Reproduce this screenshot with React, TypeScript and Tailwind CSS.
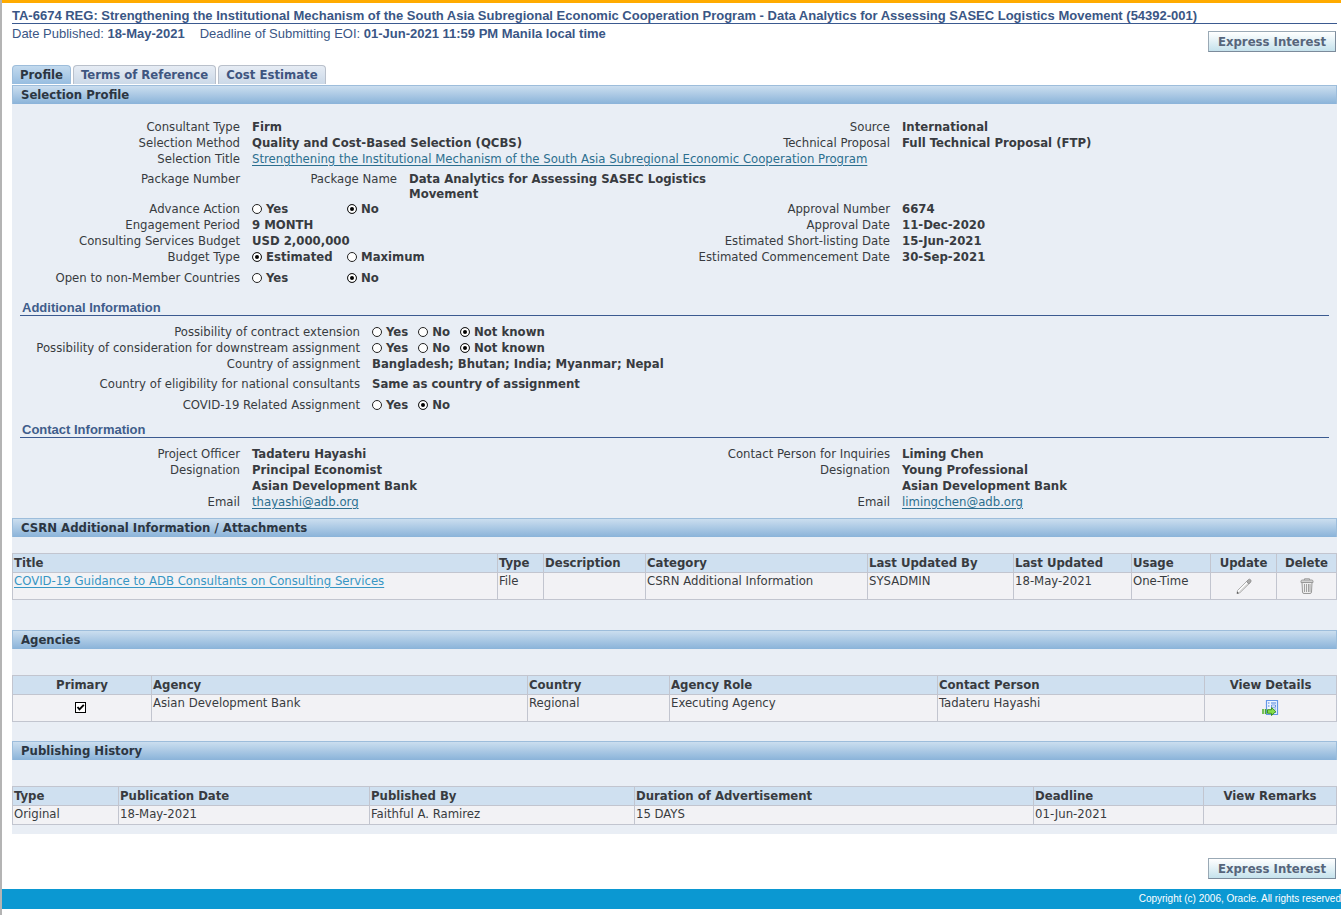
import { useState, type ReactNode } from "react";
import clsx from "clsx";

type Column = { title: string; width?: string; center?: boolean; sortable?: boolean };

const tabs = ["Profile", "Terms of Reference", "Cost Estimate"];

const attachmentColumns: Column[] = [
  { title: "Title" },
  { title: "Type", width: "w-[46px]", sortable: true },
  { title: "Description", width: "w-[102px]", sortable: true },
  { title: "Category", width: "w-[222px]", sortable: true },
  { title: "Last Updated By", width: "w-[146px]", sortable: true },
  { title: "Last Updated", width: "w-[118px]", sortable: true },
  { title: "Usage", width: "w-[79px]", sortable: true },
  { title: "Update", width: "w-[66px]", center: true },
  { title: "Delete", width: "w-[60px]", center: true },
];

const agencyColumns: Column[] = [
  { title: "Primary", width: "w-[139px]", center: true },
  { title: "Agency" },
  { title: "Country", width: "w-[142px]" },
  { title: "Agency Role", width: "w-[268px]" },
  { title: "Contact Person", width: "w-[267px]" },
  { title: "View Details", width: "w-[132px]", center: true },
];

const historyColumns: Column[] = [
  { title: "Type", width: "w-[106px]" },
  { title: "Publication Date", width: "w-[251px]" },
  { title: "Published By", width: "w-[265px]" },
  { title: "Duration of Advertisement" },
  { title: "Deadline", width: "w-[170px]" },
  { title: "View Remarks", width: "w-[133px]", center: true },
];

function ExpressButton() {
  return (
    <button className="h-[21px] w-32 border border-[#9aa9b5] border-r-[#7c8b9b] border-b-[#7c8b9b] bg-linear-to-b from-white to-[#c5e2ec] font-bold text-[#56657b]">
      Express Interest
    </button>
  );
}

function Bar({ children }: { children: ReactNode }) {
  return (
    <h2 className="h-[19px] border border-b-0 border-[#9dbddb] bg-linear-to-b from-[#cbdeef] to-[#8ab3d9] pl-2 leading-[18px] font-bold text-[#2c3642]">
      {children}
    </h2>
  );
}

function SubHeading({ children }: { children: ReactNode }) {
  return (
    <h3 className="mx-2 border-b border-[#3b5a90] pl-0.5 font-[Liberation_Sans] leading-[15px] font-bold text-[#3f5d8b]">
      {children}
    </h3>
  );
}

function Field({
  label,
  wide,
  className,
  children,
}: {
  label: string;
  wide?: boolean;
  className?: string;
  children?: ReactNode;
}) {
  return (
    <div className={clsx("flex gap-3 leading-4", className)}>
      <span className={clsx("shrink-0 text-right", wide ? "w-[348px]" : "w-[228px]")}>{label}</span>
      <div className="font-bold">{children}</div>
    </div>
  );
}

function RadioField({
  label,
  options,
  value,
  wide,
  className,
}: {
  label: string;
  options: string[];
  value: string;
  wide?: boolean;
  className?: string;
}) {
  const [selected, setSelected] = useState(value);
  return (
    <Field label={label} wide={wide} className={className}>
      <div role="radiogroup" aria-label={label} className={clsx("flex", wide && "gap-2.5")}>
        {options.map((option) => (
          <label
            key={option}
            className={clsx("flex items-center gap-1 whitespace-nowrap", !wide && "w-[95px]")}
          >
            <input
              type="radio"
              name={label}
              checked={selected === option}
              onChange={() => setSelected(option)}
              className="size-[10px] shrink-0 appearance-none rounded-full border border-[#222] bg-white checked:bg-black checked:shadow-[inset_0_0_0_2px_white]"
            />
            {option}
          </label>
        ))}
      </div>
    </Field>
  );
}

function Link({ href = "#", className, children }: { href?: string; className?: string; children: ReactNode }) {
  return (
    <a href={href} className={clsx("font-normal underline underline-offset-2", className ?? "text-[#2c6f8f]")}>
      {children}
    </a>
  );
}

function DataTable({ label, columns, cells, tall }: { label: string; columns: Column[]; cells: ReactNode[]; tall?: boolean }) {
  return (
    <table aria-label={label} className="w-full table-fixed border-collapse border border-[#c2c5cf] leading-4">
      <thead>
        <tr className="h-[19px] bg-[#cfe0f0]">
          {columns.map((col) => (
            <th
              key={col.title}
              className={clsx(
                "border border-[#c2c5cf] p-px font-bold whitespace-nowrap",
                col.width,
                col.center ? "text-center" : "text-left",
                col.sortable && "border-l-[#8b98a8]"
              )}
            >
              {col.title}
            </th>
          ))}
        </tr>
      </thead>
      <tbody>
        <tr className={clsx("bg-[#f2f2f5]", tall ? "h-[27px]" : "h-[19px]")}>
          {cells.map((cell, i) => (
            <td
              key={columns[i].title}
              className={clsx("border border-[#c2c5cf] px-px align-top", columns[i].center && "text-center")}
            >
              {cell}
            </td>
          ))}
        </tr>
      </tbody>
    </table>
  );
}

function PencilIcon() {
  return (
    <svg width="16" height="16" viewBox="0 0 16 16" fill="none">
      <path d="M1.5 12.5 10.5 3.5 13 6 4 14.7 1 15.5z" fill="#fafafa" stroke="#a6a6a6" strokeWidth=".9" />
      <path d="M3.7 14 12.400 5.500" stroke="#cfcfcf" strokeWidth="1.3" />
      <path d="M10.500 3.500 12.500 1.500q1-.8 2 .2t.3 2.200L13 6z" fill="#a9a9a9" stroke="#8a8a8a" strokeWidth=".8" />
      <path d="M.8 15.800 1.300 13.500 3 15.200z" fill="#555" />
    </svg>
  );
}

function TrashIcon() {
  return (
    <svg width="14" height="16" viewBox="0 0 14 16" fill="none" stroke="#999">
      <path d="M2 4.500 2.500 14q.1 1.500 1.500 1.500h6q1.400 0 1.500-1.500L12 4.500z" fill="#ededed" />
      <path d="M1 4.500V3.200q0-1.200 1.500-1.200h9q1.500 0 1.500 1.200v1.300z" fill="#d2d2d2" />
      <path d="M4.500 2V.8h5V2" />
      <path d="M4.500 6v8M6.500 6v8M8.500 6v8M10 6v8" strokeWidth=".9" />
    </svg>
  );
}

function DetailsIcon() {
  return (
    <svg width="17" height="16" viewBox="0 0 17 16" fill="none">
      <path d="M4.500.500h11v14h-11z" fill="#eef5ff" stroke="#6497e6" strokeWidth="1.2" />
      <path d="M6 3h1.500M9 3h5M6 6h1.500" stroke="#4d82dc" />
      <path d="M9.500 5h4v2.200h-4z" fill="#fff" stroke="#4d82dc" strokeWidth=".8" />
      <path d="M12.500 9h1.500M13 12.500h1" stroke="#6497e6" />
      <path d="M1 9v5M3.500 9v5" stroke="#4caf25" strokeWidth="1.500" />
      <path d="M5.500 9.700h4V7.500l4.300 4-4.300 4v-2.200h-4z" fill="#86dd49" stroke="#2c8b14" strokeWidth=".9" />
    </svg>
  );
}

function PrimaryCheckbox() {
  const [checked, setChecked] = useState(true);
  return (
    <label className="mt-[7px] mr-1 inline-grid">
      <input
        type="checkbox"
        aria-label="Primary agency"
        checked={checked}
        onChange={() => setChecked(!checked)}
        className="col-start-1 row-start-1 size-[11px] appearance-none border border-black bg-white"
      />
      {checked && (
        <svg width="11" height="11" viewBox="0 0 11 11" className="pointer-events-none col-start-1 row-start-1">
          <path d="M2.500 5 4.500 7.300 8.800 2.800" fill="none" stroke="#000" strokeWidth="1.900" />
        </svg>
      )}
    </label>
  );
}

export default function App() {
  const [activeTab, setActiveTab] = useState("Profile");

  return (
    <div className="min-h-screen border-l-2 border-[#b4b4b4] bg-white font-['DejaVu_Sans_Condensed',sans-serif] text-[13px] text-[#383b40]">
      <div className="h-[3px] bg-[#ffab00]" />

      <div className="pr-1 pl-2.5">
        <header className="font-[Liberation_Sans] text-[#3a5685]">
          <h1 className="border-b border-[#3b5a90] pt-[5px] leading-[15px] font-bold whitespace-nowrap">
            TA-6674 REG: Strengthening the Institutional Mechanism of the South Asia Subregional Economic Cooperation
            Program - Data Analytics for Assessing SASEC Logistics Movement (54392-001)
          </h1>
          <div className="flex items-start justify-between">
            <p className="flex gap-[15px] leading-5">
              <span>
                Date Published: <b>18-May-2021</b>
              </span>
              <span>
                Deadline of Submitting EOI: <b>01-Jun-2021 11:59 PM Manila local time</b>
              </span>
            </p>
            <div className="flex pt-[7px] pr-px font-['DejaVu_Sans_Condensed',sans-serif]">
              <ExpressButton />
            </div>
          </div>
        </header>

        <div role="tablist" className="mt-[13px] flex gap-0.5">
          {tabs.map((tab) => (
            <button
              key={tab}
              role="tab"
              aria-selected={activeTab === tab}
              onClick={() => setActiveTab(tab)}
              className={clsx(
                "h-[19px] rounded-t border border-b-0 px-[7px] leading-4 font-bold",
                activeTab === tab
                  ? "border-[#9dbddb] bg-linear-to-b from-[#c3daee] to-[#97bde0] text-[#2c3642]"
                  : "border-[#b9c0cb] bg-linear-to-b from-[#e6ecf4] to-[#cbd9e8] text-[#3f5680]"
              )}
            >
              {tab}
            </button>
          ))}
        </div>

        <main className="mt-px bg-[#e9eef5] pb-[9px]">
          <Bar>Selection Profile</Bar>
          <div className="grid grid-cols-2 pt-[15px] pr-[25px] pb-3.5">
            <Field label="Consultant Type">Firm</Field>
            <Field label="Source">International</Field>
            <Field label="Selection Method">Quality and Cost-Based Selection (QCBS)</Field>
            <Field label="Technical Proposal">Full Technical Proposal (FTP)</Field>
            <Field label="Selection Title" className="col-span-2">
              <Link>Strengthening the Institutional Mechanism of the South Asia Subregional Economic Cooperation Program</Link>
            </Field>
            <Field label="Package Number" className="col-span-2 pt-1">
              <div className="flex gap-3">
                <span className="w-[145px] text-right font-normal">Package Name</span>
                <span className="w-[300px] leading-[15px]">Data Analytics for Assessing SASEC Logistics Movement</span>
              </div>
            </Field>
            <RadioField label="Advance Action" options={["Yes", "No"]} value="No" />
            <Field label="Approval Number">6674</Field>
            <Field label="Engagement Period">9 MONTH</Field>
            <Field label="Approval Date">11-Dec-2020</Field>
            <Field label="Consulting Services Budget">USD 2,000,000</Field>
            <Field label="Estimated Short-listing Date">15-Jun-2021</Field>
            <RadioField label="Budget Type" options={["Estimated", "Maximum"]} value="Estimated" />
            <Field label="Estimated Commencement Date">30-Sep-2021</Field>
            <RadioField label="Open to non-Member Countries" options={["Yes", "No"]} value="No" className="pt-[5px]" />
          </div>

          <SubHeading>Additional Information</SubHeading>
          <div className="pt-2 pb-[9px]">
            <RadioField wide label="Possibility of contract extension" options={["Yes", "No", "Not known"]} value="Not known" />
            <RadioField
              wide
              label="Possibility of consideration for downstream assignment"
              options={["Yes", "No", "Not known"]}
              value="Not known"
            />
            <Field wide label="Country of assignment">
              Bangladesh; Bhutan; India; Myanmar; Nepal
            </Field>
            <Field wide label="Country of eligibility for national consultants" className="pt-1">
              Same as country of assignment
            </Field>
            <RadioField wide label="COVID-19 Related Assignment" options={["Yes", "No"]} value="No" className="pt-[5px]" />
          </div>

          <SubHeading>Contact Information</SubHeading>
          <div className="grid grid-cols-2 pt-2 pr-[25px] pb-2">
            <Field label="Project Officer">Tadateru Hayashi</Field>
            <Field label="Contact Person for Inquiries">Liming Chen</Field>
            <Field label="Designation">
              Principal Economist
              <br />
              Asian Development Bank
            </Field>
            <Field label="Designation">
              Young Professional
              <br />
              Asian Development Bank
            </Field>
            <Field label="Email">
              <Link href="mailto:thayashi@adb.org">thayashi@adb.org</Link>
            </Field>
            <Field label="Email">
              <Link href="mailto:limingchen@adb.org">limingchen@adb.org</Link>
            </Field>
          </div>

          <Bar>CSRN Additional Information / Attachments</Bar>
          <div className="pt-4 pb-[30px]">
            <DataTable
              tall
              label="Attachments"
              columns={attachmentColumns}
              cells={[
                <Link className="text-[#3796c4]">COVID-19 Guidance to ADB Consultants on Consulting Services</Link>,
                "File",
                "",
                "CSRN Additional Information",
                "SYSADMIN",
                "18-May-2021",
                "One-Time",
                <button aria-label="Update" className="mt-[5px] align-top">
                  <PencilIcon />
                </button>,
                <button aria-label="Delete" className="mt-[5px] align-top">
                  <TrashIcon />
                </button>,
              ]}
            />
          </div>

          <Bar>Agencies</Bar>
          <div className="pt-[26px] pb-[19px]">
            <DataTable
              tall
              label="Agencies"
              columns={agencyColumns}
              cells={[
                <PrimaryCheckbox />,
                "Asian Development Bank",
                "Regional",
                "Executing Agency",
                "Tadateru Hayashi",
                <button aria-label="View details" className="mt-[5px] align-top">
                  <DetailsIcon />
                </button>,
              ]}
            />
          </div>

          <Bar>Publishing History</Bar>
          <div className="pt-[26px]">
            <DataTable
              label="Publishing history"
              columns={historyColumns}
              cells={["Original", "18-May-2021", "Faithful A. Ramirez", "15 DAYS", "01-Jun-2021", ""]}
            />
          </div>
        </main>

        <div className="flex justify-end pt-6 pr-px pb-2.5">
          <ExpressButton />
        </div>
      </div>

      <footer className="h-5 bg-[#0b98d2] text-right font-[Liberation_Sans] text-[10px] leading-5 text-white">
        Copyright (c) 2006, Oracle. All rights reserved
      </footer>
    </div>
  );
}
